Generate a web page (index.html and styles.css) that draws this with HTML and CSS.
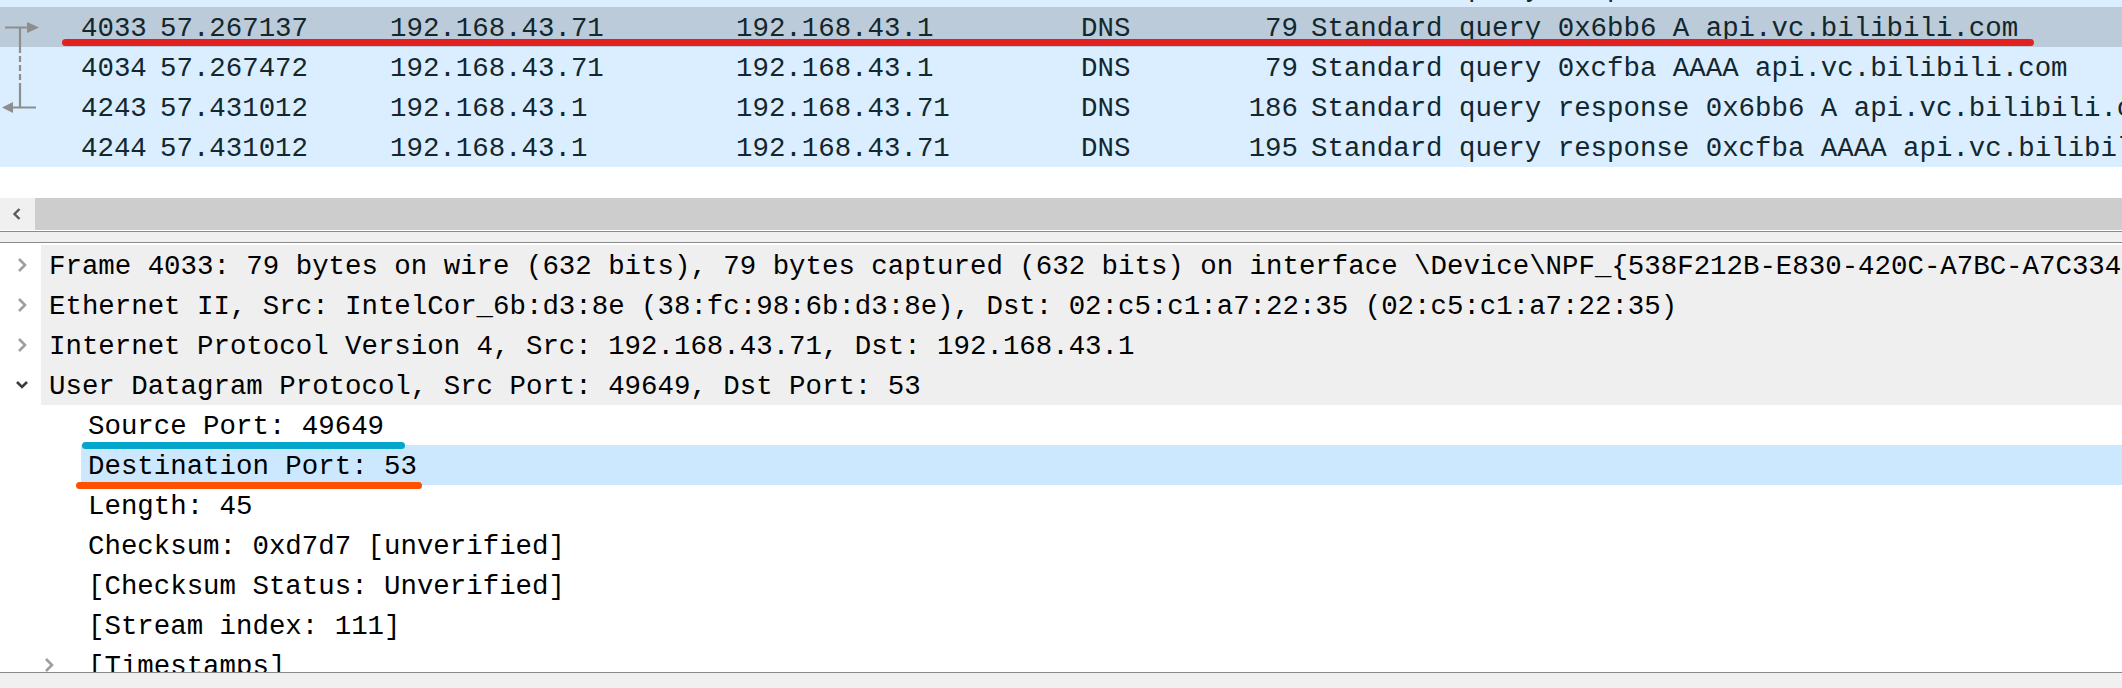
FILE: index.html
```html
<!DOCTYPE html>
<html>
<head>
<meta charset="utf-8">
<link rel="stylesheet" href="styles.css">
</head>
<body>
<div class="page">
  <div class="list">
    <div class="row prev">
      <span class="ind"></span>
      <span class="no"></span><span class="time"></span><span class="src"></span><span class="dst"></span><span class="proto"></span><span class="len"></span><span class="info">Standard query response 0x5a1f A data.bilibili.com</span>
    </div>
    <div class="row sel">
      <span class="ind"><svg width="45" height="40" viewBox="0 0 45 40"><path d="M5 20.5H29M20 20.5V40" stroke="#8e8e8e" stroke-width="2.2" fill="none"/><path d="M27 15L39 20.5L27 26Z" fill="#8e8e8e"/></svg></span>
      <span class="no">4033</span><span class="time">57.267137</span><span class="src">192.168.43.71</span><span class="dst">192.168.43.1</span><span class="proto">DNS</span><span class="len">79</span><span class="info">Standard query 0x6bb6 A api.vc.bilibili.com</span>
    </div>
    <div class="row">
      <span class="ind"><svg width="45" height="40" viewBox="0 0 45 40"><path d="M20 0V40" stroke="#8e8e8e" stroke-width="2.2" stroke-dasharray="6 3" fill="none"/></svg></span>
      <span class="no">4034</span><span class="time">57.267472</span><span class="src">192.168.43.71</span><span class="dst">192.168.43.1</span><span class="proto">DNS</span><span class="len">79</span><span class="info">Standard query 0xcfba AAAA api.vc.bilibili.com</span>
    </div>
    <div class="row">
      <span class="ind"><svg width="45" height="40" viewBox="0 0 45 40"><path d="M20 0V20.5M12 20.5H36" stroke="#8e8e8e" stroke-width="2.2" fill="none"/><path d="M13 15L2 20.5L13 26Z" fill="#8e8e8e"/></svg></span>
      <span class="no">4243</span><span class="time">57.431012</span><span class="src">192.168.43.1</span><span class="dst">192.168.43.71</span><span class="proto">DNS</span><span class="len">186</span><span class="info">Standard query response 0x6bb6 A api.vc.bilibili.com</span>
    </div>
    <div class="row">
      <span class="ind"></span>
      <span class="no">4244</span><span class="time">57.431012</span><span class="src">192.168.43.1</span><span class="dst">192.168.43.71</span><span class="proto">DNS</span><span class="len">195</span><span class="info">Standard query response 0xcfba AAAA api.vc.bilibili.com</span>
    </div>
  </div>

  <div class="gap"></div>

  <div class="hscroll">
    <div class="hs-btn"><svg width="12" height="14" viewBox="0 0 12 14"><path d="M8.5 2L3.5 7L8.5 12" stroke="#5a5a5a" stroke-width="2.4" fill="none"/></svg></div>
    <div class="hs-thumb"></div>
  </div>

  <div class="splitter"></div>

  <div class="detail">
    <div class="node top">
      <span class="tog"><svg width="14" height="18" viewBox="0 0 14 18"><path d="M4 3L10 9L4 15" stroke="#9e9e9e" stroke-width="2.6" fill="none"/></svg></span>
      <span class="label">Frame 4033: 79 bytes on wire (632 bits), 79 bytes captured (632 bits) on interface \Device\NPF_{538F212B-E830-420C-A7BC-A7C334D6F1E2}, id 0</span>
    </div>
    <div class="node top">
      <span class="tog"><svg width="14" height="18" viewBox="0 0 14 18"><path d="M4 3L10 9L4 15" stroke="#9e9e9e" stroke-width="2.6" fill="none"/></svg></span>
      <span class="label">Ethernet II, Src: IntelCor_6b:d3:8e (38:fc:98:6b:d3:8e), Dst: 02:c5:c1:a7:22:35 (02:c5:c1:a7:22:35)</span>
    </div>
    <div class="node top">
      <span class="tog"><svg width="14" height="18" viewBox="0 0 14 18"><path d="M4 3L10 9L4 15" stroke="#9e9e9e" stroke-width="2.6" fill="none"/></svg></span>
      <span class="label">Internet Protocol Version 4, Src: 192.168.43.71, Dst: 192.168.43.1</span>
    </div>
    <div class="node top">
      <span class="tog"><svg width="16" height="18" viewBox="0 0 16 18"><path d="M3 6L8 11L13 6" stroke="#3c3c3c" stroke-width="2.6" fill="none"/></svg></span>
      <span class="label">User Datagram Protocol, Src Port: 49649, Dst Port: 53</span>
    </div>
    <div class="node child">
      <span class="tog"></span>
      <span class="label">Source Port: 49649</span>
    </div>
    <div class="node child sel">
      <span class="tog"></span>
      <span class="label">Destination Port: 53</span>
    </div>
    <div class="node child">
      <span class="tog"></span>
      <span class="label">Length: 45</span>
    </div>
    <div class="node child">
      <span class="tog"></span>
      <span class="label">Checksum: 0xd7d7 [unverified]</span>
    </div>
    <div class="node child">
      <span class="tog"></span>
      <span class="label">[Checksum Status: Unverified]</span>
    </div>
    <div class="node child">
      <span class="tog"></span>
      <span class="label">[Stream index: 111]</span>
    </div>
    <div class="node child">
      <span class="tog ctog"><svg width="14" height="18" viewBox="0 0 14 18"><path d="M4 3L10 9L4 15" stroke="#9e9e9e" stroke-width="2.6" fill="none"/></svg></span>
      <span class="label">[Timestamps]</span>
    </div>
  </div>

  <div class="status"></div>

  <div class="mark mark-red"></div>
  <div class="mark mark-blue"></div>
  <div class="mark mark-orange"></div>
</div>
</body>
</html>
```

FILE: styles.css
```css
html, body {
  margin: 0;
  padding: 0;
  background: #ffffff;
  overflow: hidden;
}

.page {
  position: relative;
  width: 2122px;
  height: 688px;
  overflow: hidden;
  font-family: "Liberation Mono", "DejaVu Sans Mono", monospace;
  font-size: 27.42px;
}

/* ---------- packet list ---------- */
.list {
  height: 167px;
  background: #daeeff;
  overflow: hidden;
}

.row {
  display: grid;
  grid-template-columns: 81px 79px 230px 346px 345px 120px 97px 1fr;
  height: 40px;
  box-sizing: border-box;
  padding-top: 4px;
  line-height: 36px;
  color: #12272e;
  white-space: nowrap;
}

.row.prev {
  margin-top: -33px;
}

.row.sel {
  background: #bccbd9;
}

.ind {
  position: relative;
  margin-top: -4px;
  height: 40px;
}

.ind svg {
  display: block;
}

.len {
  text-align: right;
}

.info {
  padding-left: 13px;
  overflow: hidden;
}

.gap {
  height: 31px;
  background: #ffffff;
}

/* ---------- horizontal scrollbar ---------- */
.hscroll {
  display: flex;
  height: 32px;
}

.hs-btn {
  width: 35px;
  background: #f0f0f0;
  display: flex;
  align-items: center;
  justify-content: center;
}

.hs-btn svg {
  display: block;
  margin-left: -1px;
}

.hs-thumb {
  flex: 1;
  background: #cdcdcd;
}

/* ---------- splitter ---------- */
.splitter {
  margin-top: 1px;
  height: 10px;
  background: #f0f0f0;
  border-top: 1px solid #8a8a8a;
  border-bottom: 1px solid #8a8a8a;
}

/* ---------- packet details ---------- */
.detail {
  height: 429px;
  padding-top: 2px;
  box-sizing: border-box;
  background: #ffffff;
  overflow: hidden;
  color: #000000;
}

.node {
  display: flex;
  height: 40px;
  white-space: nowrap;
}

.tog {
  flex: none;
  display: flex;
  align-items: center;
  justify-content: center;
}

.tog svg {
  display: block;
}

.node.top .tog {
  width: 41px;
  padding-left: 2px;
  box-sizing: border-box;
}

.node.child .tog {
  width: 81px;
}

.node.child .ctog {
  padding-left: 42px;
  box-sizing: border-box;
  justify-content: flex-start;
}

.label {
  flex: 1;
  box-sizing: border-box;
  padding-top: 4px;
  line-height: 36px;
  overflow: hidden;
}

.node.top .label {
  background: #efefef;
  padding-left: 8px;
}

.node.child .label {
  padding-left: 7px;
}

.node.child.sel .label {
  background: #cce8ff;
}

.status {
  height: 15px;
  background: #f0f0f0;
  border-top: 1px solid #8a8a8a;
}

/* ---------- annotation strokes ---------- */
.mark {
  position: absolute;
  height: 7px;
  border-radius: 4px;
}

.mark-red {
  left: 62px;
  top: 39px;
  width: 1972px;
  background: #e41f1f;
}

.mark-blue {
  left: 82px;
  top: 442px;
  width: 323px;
  background: #04a6cc;
}

.mark-orange {
  left: 76px;
  top: 482px;
  width: 346px;
  background: #ff5100;
}
```
